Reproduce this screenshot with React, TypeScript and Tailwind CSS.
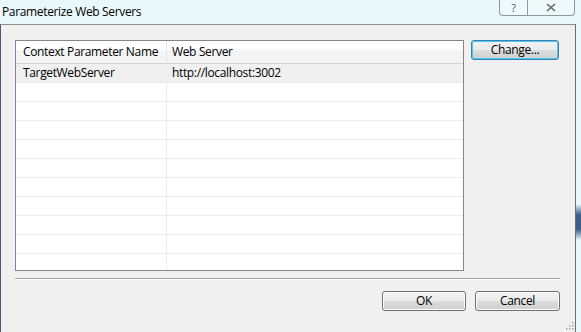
import React from "react";

const rows = [
  { name: "TargetWebServer", server: "http://localhost:3002" },
  ...Array.from({ length: 10 }, () => ({ name: "", server: "" })),
];

function WinButton({ label, focused }: { label: string; focused?: boolean }) {
  return (
    <div
      className={`flex items-center justify-center rounded-[3px] border ${
        focused
          ? "border-[#3c7fb1] shadow-[inset_0_0_0_1px_#48c8f0]"
          : "border-[#707070] shadow-[inset_0_0_0_1px_#fcfcfc]"
      } bg-[linear-gradient(to_bottom,#f2f2f2_0%,#ebebeb_50%,#dddddd_51%,#cfcfcf_100%)] text-[12px] text-black`}
    >
      {label}
    </div>
  );
}

export default function App() {
  return (
    <div
      className="flex h-[332px] w-[581px] flex-col overflow-hidden bg-[#e9f8fb] tracking-[-0.35px]"
      style={{ fontFamily: '"Open Sans", "Noto Sans", sans-serif' }}
    >
      {/* title bar */}
      <div className="flex h-[24px] shrink-0 items-start">
        <div className="pl-[2px] pt-[3px] text-[12px] text-black">Parameterize Web Servers</div>
        <div className="ml-auto mr-[6px] flex h-[16px] rounded-b-[4px] border border-t-0 border-[#8a9aa4] bg-[#eef9fc]">
          <div className="flex w-[28px] items-center justify-center border-r border-[#8a9aa4] text-[11px] leading-none text-[#555]">
            ?
          </div>
          <div className="flex w-[46px] items-center justify-center">
            <svg width="10" height="9" viewBox="0 0 10 9">
              <path d="M1 1 L9 8 M9 1 L1 8" stroke="#666" strokeWidth="1.6" fill="none" />
            </svg>
          </div>
        </div>
      </div>

      <div className="flex flex-1">
        {/* client area */}
        <div className="flex w-[576px] flex-col border-l border-r border-t border-l-[#4a5a6a] border-r-[#6d6d6d] border-t-[#8e8f8f] bg-[#f0f0f0] pl-[14px] pt-[15px]">
          <div className="flex items-start">
            {/* list view */}
            <div className="w-[449px] border border-[#828790] bg-white">
              <div className="flex h-[23px] border-b border-[#d5d5d5] bg-[linear-gradient(to_bottom,#ffffff_0%,#ffffff_40%,#f3f4f6_45%,#f3f4f6_100%)] text-[12px] text-black">
                <div className="flex w-[151px] items-center border-r border-[#e3e4e6] pl-[7px]">
                  Context Parameter Name
                </div>
                <div className="flex w-[293px] items-center pl-[5px]">Web Server</div>
              </div>
              {rows.map((r, i) => (
                <div
                  key={i}
                  className={`flex h-[19px] border-b border-[#ececec] text-[12px] text-black last:h-[16px] last:border-b-0 ${
                    i === 0 ? "bg-[#f0f0f0]" : ""
                  }`}
                >
                  <div className="flex w-[151px] items-center border-r border-[#ececec] pl-[7px]">
                    {r.name}
                  </div>
                  <div className="flex items-center pl-[5px]">{r.server}</div>
                </div>
              ))}
            </div>
            <div className="ml-[7px] h-[24px] w-[88px]">
              <WinButton label="Change..." focused />
            </div>
          </div>

          {/* separator */}
          <div className="mt-[7px] w-[545px] border-t border-b border-t-[#a0a0a0] border-b-[#ffffff]" />

          <div className="mt-[11px] flex w-[545px] justify-end gap-[9px]">
            <div className="h-[25px] w-[84px]">
              <WinButton label="OK" />
            </div>
            <div className="h-[25px] w-[85px]">
              <WinButton label="Cancel" />
            </div>
          </div>

          <div className="mt-auto mb-[2px] flex justify-end pr-[1px]">
            <svg width="8" height="8" viewBox="0 0 8 8">
              {[
                [6, 0],
                [3, 3],
                [6, 3],
                [0, 6],
                [3, 6],
                [6, 6],
              ].map(([x, y], k) => (
                <rect key={k} x={x} y={y} width="1.5" height="1.5" fill="#a8a8a8" />
              ))}
            </svg>
          </div>
        </div>
        {/* right frame glimpse */}
        <div className="flex w-[5px] flex-col bg-[#e9f8fb]">
          <div className="mt-[180px] h-[36px] bg-[linear-gradient(to_bottom,#e9f8fb,#3d5f8a_30%,#3d5f8a_70%,#e9f8fb)]" />
        </div>
      </div>
    </div>
  );
}
